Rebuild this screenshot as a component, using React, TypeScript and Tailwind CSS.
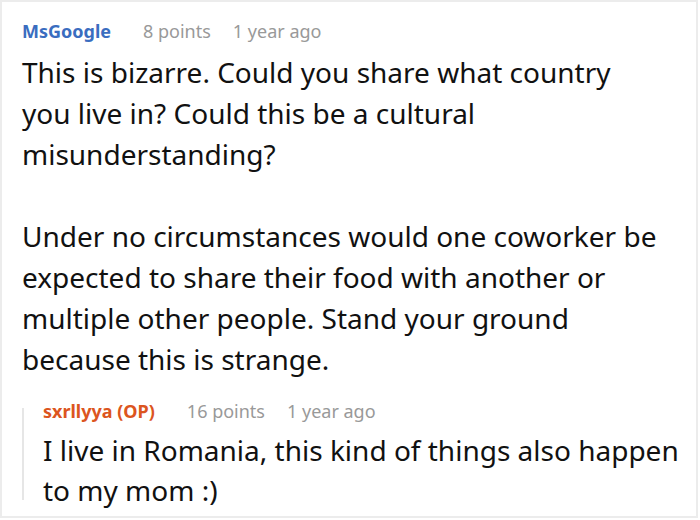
import React from 'react';

const font = { fontFamily: '"Noto Sans", "Open Sans", sans-serif' };

interface MetaProps {
  author: string;
  authorClass: string;
  points: string;
  age: string;
}

const Meta: React.FC<MetaProps> = ({ author, authorClass, points, age }) => (
  <div className="flex items-center h-[30px] text-[18px]">
    <span className={`font-bold mr-[32px] ${authorClass}`}>{author}</span>
    <span className="text-[#999999] mr-[22px]">{points}</span>
    <span className="text-[#999999]">{age}</span>
  </div>
);

export default function App() {
  return (
    <div className="w-[700px] h-[520px] bg-white">
      <div
        className="w-[698px] h-[518px] border-2 border-[#ececec] pl-[20px] pt-[14px] text-[#111111] overflow-hidden"
        style={font}
      >
        <Meta author="MsGoogle" authorClass="text-[#3a6dc0]" points="8 points" age="1 year ago" />
        <div className="text-[28px] leading-[41px] mt-[6px] w-[636px]">
          <p>This is bizarre. Could you share what country you live in? Could this be a cultural misunderstanding?</p>
          <p className="mt-[41px]">
            Under no circumstances would one coworker be expected to share their food with another or multiple other
            people. Stand your ground because this is strange.
          </p>
        </div>

        <div className="flex mt-[16px]">
          <div className="w-[2px] bg-[#e6e6e6] mt-[12px] h-[92px] shrink-0" />
          <div className="pl-[19px]">
            <Meta author="sxrllyya (OP)" authorClass="text-[#dc5520]" points="16 points" age="1 year ago" />
            <div className="text-[28px] leading-[40px] mt-[4px] w-[640px]">
              I live in Romania, this kind of things also happen to my mom :)
            </div>
          </div>
        </div>
      </div>
    </div>
  );
}
